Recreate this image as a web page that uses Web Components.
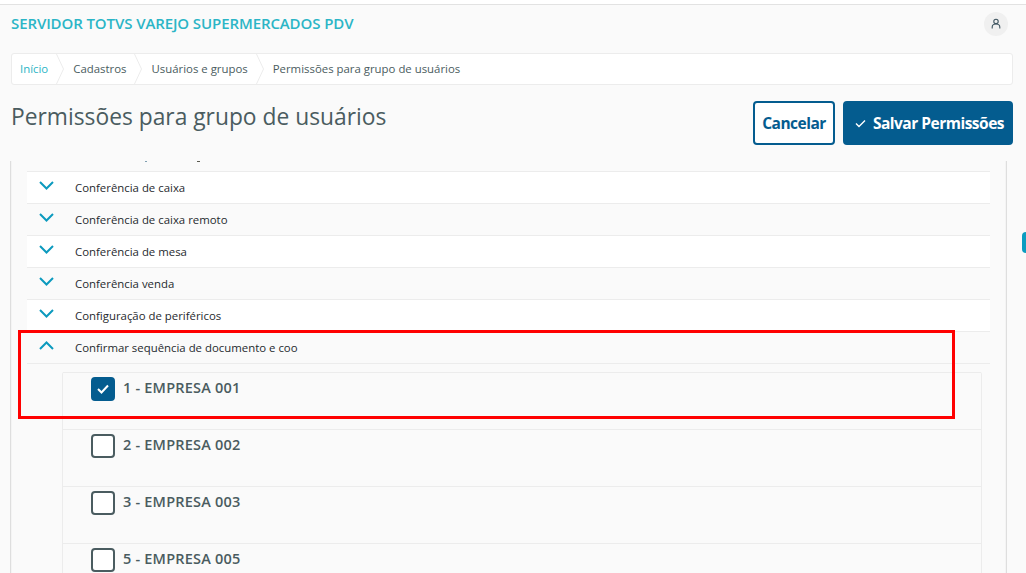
<!DOCTYPE html>
<html lang="pt-BR">
<head>
<meta charset="utf-8">
<title>Permissões para grupo de usuários</title>
<style>
  html, body { margin: 0; height: 100%; overflow: hidden; }
  body {
    background: #fafafa;
    color: #4a5c60;
    font-family: "Open Sans", "Noto Sans", sans-serif;
    position: relative;
  }
  app-page { height: 100%; }
</style>
</head>
<body>
<app-page>
  <top-bar title="SERVIDOR TOTVS VAREJO SUPERMERCADOS PDV"></top-bar>
  <bread-crumbs>
    <crumb-item link>Início</crumb-item>
    <crumb-item>Cadastros</crumb-item>
    <crumb-item>Usuários e grupos</crumb-item>
    <crumb-item last>Permissões para grupo de usuários</crumb-item>
  </bread-crumbs>
  <title-bar heading="Permissões para grupo de usuários">
    <app-button outline>Cancelar</app-button>
    <app-button check>Salvar Permissões</app-button>
  </title-bar>
  <perm-panel>
    <perm-row>Conferência de caixa</perm-row>
    <perm-row alt>Conferência de caixa remoto</perm-row>
    <perm-row>Conferência de mesa</perm-row>
    <perm-row alt>Conferência venda</perm-row>
    <perm-row>Configuração de periféricos</perm-row>
    <perm-row alt open>Confirmar sequência de documento e coo</perm-row>
    <company-list>
      <company-row checked>1 - EMPRESA 001</company-row>
      <company-row>2 - EMPRESA 002</company-row>
      <company-row>3 - EMPRESA 003</company-row>
      <company-row>5 - EMPRESA 005</company-row>
    </company-list>
  </perm-panel>
</app-page>
<red-mark></red-mark>
<side-tab></side-tab>

<script>
const shadowOf = (el, html) => {
  const shadow = el.attachShadow({ mode: "open" });
  shadow.innerHTML = html;
  return shadow;
};

class AppPage extends HTMLElement {
  connectedCallback() {
    shadowOf(this, `
      <style>
        :host { display: flex; flex-direction: column; }
      </style>
      <slot></slot>
    `);
  }
}

class TopBar extends HTMLElement {
  connectedCallback() {
    shadowOf(this, `
      <style>
        :host {
          display: flex;
          align-items: center;
          justify-content: space-between;
          box-sizing: border-box;
          height: 53px;
          padding: 4px 18px 13px 11px;
          border-top: 4px solid #fff;
          background: #fafafa;
          box-shadow: inset 0 1px 0 #e2e2e2;
        }
        .name {
          color: #2bb5c6;
          font-size: 15px;
          font-weight: 600;
          letter-spacing: -0.1px;
          margin-top: -2px;
        }
        .avatar {
          width: 24px;
          height: 24px;
          border-radius: 50%;
          background: #f0f0f0;
          display: flex;
          align-items: center;
          justify-content: center;
        }
      </style>
      <span class="name">${this.getAttribute("title")}</span>
      <span class="avatar">
        <svg width="12" height="12" viewBox="0 0 12 12" fill="none" stroke="#3f5560" stroke-width="1.1">
          <circle cx="6" cy="3.4" r="2.2"/>
          <path d="M2.2 10.4 V9 C2.2 7.2 3.8 6 6 6 C8.2 6 9.8 7.2 9.8 9 V10.4"/>
        </svg>
      </span>
    `);
    this.removeAttribute("title");
  }
}

class BreadCrumbs extends HTMLElement {
  connectedCallback() {
    shadowOf(this, `
      <style>
        :host {
          display: flex;
          box-sizing: border-box;
          height: 32px;
          margin: 0 13px 0 11px;
          padding-left: 8px;
          background: #fff;
          border: 1px solid #ececec;
          border-radius: 3px;
        }
      </style>
      <slot></slot>
    `);
  }
}

class CrumbItem extends HTMLElement {
  connectedCallback() {
    const last = this.hasAttribute("last");
    shadowOf(this, `
      <style>
        :host {
          display: flex;
          align-items: center;
          font-size: 11.4px;
          color: ${this.hasAttribute("link") ? "#2bb5c6" : "#4a5c60"};
        }
        span { padding: 0 8px 2px 0; }
        svg { display: block; margin-right: 9px; }
      </style>
      <span><slot></slot></span>
      ${last ? "" : `<svg width="8" height="30" viewBox="0 0 8 30" fill="none" stroke="#ececec">
        <path d="M0.5 0 L7.5 15 L0.5 30"/>
      </svg>`}
    `);
  }
}

class TitleBar extends HTMLElement {
  connectedCallback() {
    shadowOf(this, `
      <style>
        :host {
          display: flex;
          align-items: flex-start;
          justify-content: space-between;
          margin: 16px 13px 16px 11px;
        }
        h1 {
          margin: 0;
          font-size: 22.8px;
          font-weight: 400;
          line-height: 32px;
          color: #4a5c60;
        }
        .actions { display: flex; gap: 8px; }
      </style>
      <h1>${this.getAttribute("heading")}</h1>
      <div class="actions"><slot></slot></div>
    `);
  }
}

class AppButton extends HTMLElement {
  connectedCallback() {
    const outline = this.hasAttribute("outline");
    shadowOf(this, `
      <style>
        :host {
          display: flex;
          align-items: center;
          justify-content: center;
          gap: 7px;
          box-sizing: border-box;
          height: 44px;
          padding: 0 7px 0 ${outline ? 7 : 10}px;
          border: 2px solid #045c8f;
          border-radius: 4px;
          background: ${outline ? "#fff" : "#045c8f"};
          color: ${outline ? "#045c8f" : "#fff"};
          font-size: 15.5px;
          font-weight: 700;
          letter-spacing: -0.5px;
          white-space: nowrap;
        }
      </style>
      ${this.hasAttribute("check") ? `<svg width="11" height="9" viewBox="0 0 11 9" fill="none" stroke="#fff" stroke-width="1.4">
        <path d="M1 4.5 L4 7.5 L10 1.5"/>
      </svg>` : ""}
      <slot></slot>
    `);
  }
}

class PermPanel extends HTMLElement {
  connectedCallback() {
    shadowOf(this, `
      <style>
        :host {
          display: block;
          flex: 1;
          min-height: 0;
          overflow: hidden;
          box-sizing: border-box;
          margin: 0 19px 0 10px;
          padding: 0 16px;
          border-left: 1px solid #dedede;
          border-right: 1px solid #dedede;
          box-shadow: inset 1px 0 0 #f4f4f4, inset -1px 0 0 #f4f4f4;
        }
        .clipped { position: relative; height: 10px; }
        i { position: absolute; top: 0; height: 1px; }
        .a { left: 118px; width: 2px; background: #7f9fb0; }
        .b { left: 170px; width: 3px; background: #5a5a50; }
      </style>
      <div class="clipped"><i class="a"></i><i class="b"></i></div>
      <slot></slot>
    `);
  }
}

class PermRow extends HTMLElement {
  connectedCallback() {
    const open = this.hasAttribute("open");
    shadowOf(this, `
      <style>
        :host {
          display: flex;
          align-items: center;
          box-sizing: border-box;
          height: 32px;
          padding: 0 0 0 12px;
          border-top: 1px solid #ececec;
          background: ${this.hasAttribute("alt") ? "#fafafa" : "#fff"};
          color: #1f2a2e;
          font-size: 11.4px;
        }
        :host([open]) { border-bottom: 1px solid #ececec; height: 33px; }
        svg { display: block; margin: -5px 21px 0 0; }
      </style>
      <svg width="15" height="9" viewBox="0 0 15 9" fill="none" stroke="#0c9abe" stroke-width="2">
        <path d="${open ? "M1 8 L7.5 1.5 L14 8" : "M1 1 L7.5 7.5 L14 1"}"/>
      </svg>
      <slot></slot>
    `);
  }
}

class CompanyList extends HTMLElement {
  connectedCallback() {
    shadowOf(this, `
      <style>
        :host {
          display: block;
          margin: 8px 8px 0 35px;
          border-left: 1px solid #ececec;
          border-right: 1px solid #ececec;
          border-radius: 2px 2px 0 0;
        }
      </style>
      <slot></slot>
    `);
  }
}

class CompanyRow extends HTMLElement {
  connectedCallback() {
    const checked = this.hasAttribute("checked");
    shadowOf(this, `
      <style>
        :host {
          display: flex;
          align-items: flex-start;
          gap: 8px;
          box-sizing: border-box;
          height: 57px;
          padding: 4px 0 0 28px;
          border-top: 1px solid #ececec;
          color: #4a5c60;
          font-size: 14.5px;
          font-weight: 600;
          letter-spacing: 0.2px;
        }
        .box {
          box-sizing: border-box;
          width: 24px;
          height: 24px;
          border: 2px solid ${checked ? "#045c8f" : "#4a5c60"};
          border-radius: 4px;
          background: ${checked ? "#045c8f" : "#fff"};
          display: flex;
          align-items: center;
          justify-content: center;
        }
        .label { line-height: 22px; }
      </style>
      <span class="box">${checked ? `<svg width="12" height="10" viewBox="0 0 12 10" fill="none" stroke="#fff" stroke-width="2">
        <path d="M1 5 L4.5 8.5 L11 1.5"/>
      </svg>` : ""}</span>
      <span class="label"><slot></slot></span>
    `);
  }
}

// annotation drawn on top of the screenshot
class RedMark extends HTMLElement {
  connectedCallback() {
    shadowOf(this, `
      <style>
        :host {
          position: absolute;
          left: 18px;
          top: 330px;
          width: 937px;
          height: 89px;
          box-sizing: border-box;
          border: 3px solid #f00;
        }
      </style>
    `);
  }
}

class SideTab extends HTMLElement {
  connectedCallback() {
    shadowOf(this, `
      <style>
        :host {
          position: absolute;
          right: 0;
          top: 232px;
          width: 4px;
          height: 21px;
          background: #0b9cc0;
          border-radius: 4px 0 0 4px;
        }
      </style>
    `);
  }
}

const elements = {
  "app-page": AppPage,
  "top-bar": TopBar,
  "bread-crumbs": BreadCrumbs,
  "crumb-item": CrumbItem,
  "title-bar": TitleBar,
  "app-button": AppButton,
  "perm-panel": PermPanel,
  "perm-row": PermRow,
  "company-list": CompanyList,
  "company-row": CompanyRow,
  "red-mark": RedMark,
  "side-tab": SideTab,
};
Object.keys(elements).forEach((name) => customElements.define(name, elements[name]));
</script>
</body>
</html>
